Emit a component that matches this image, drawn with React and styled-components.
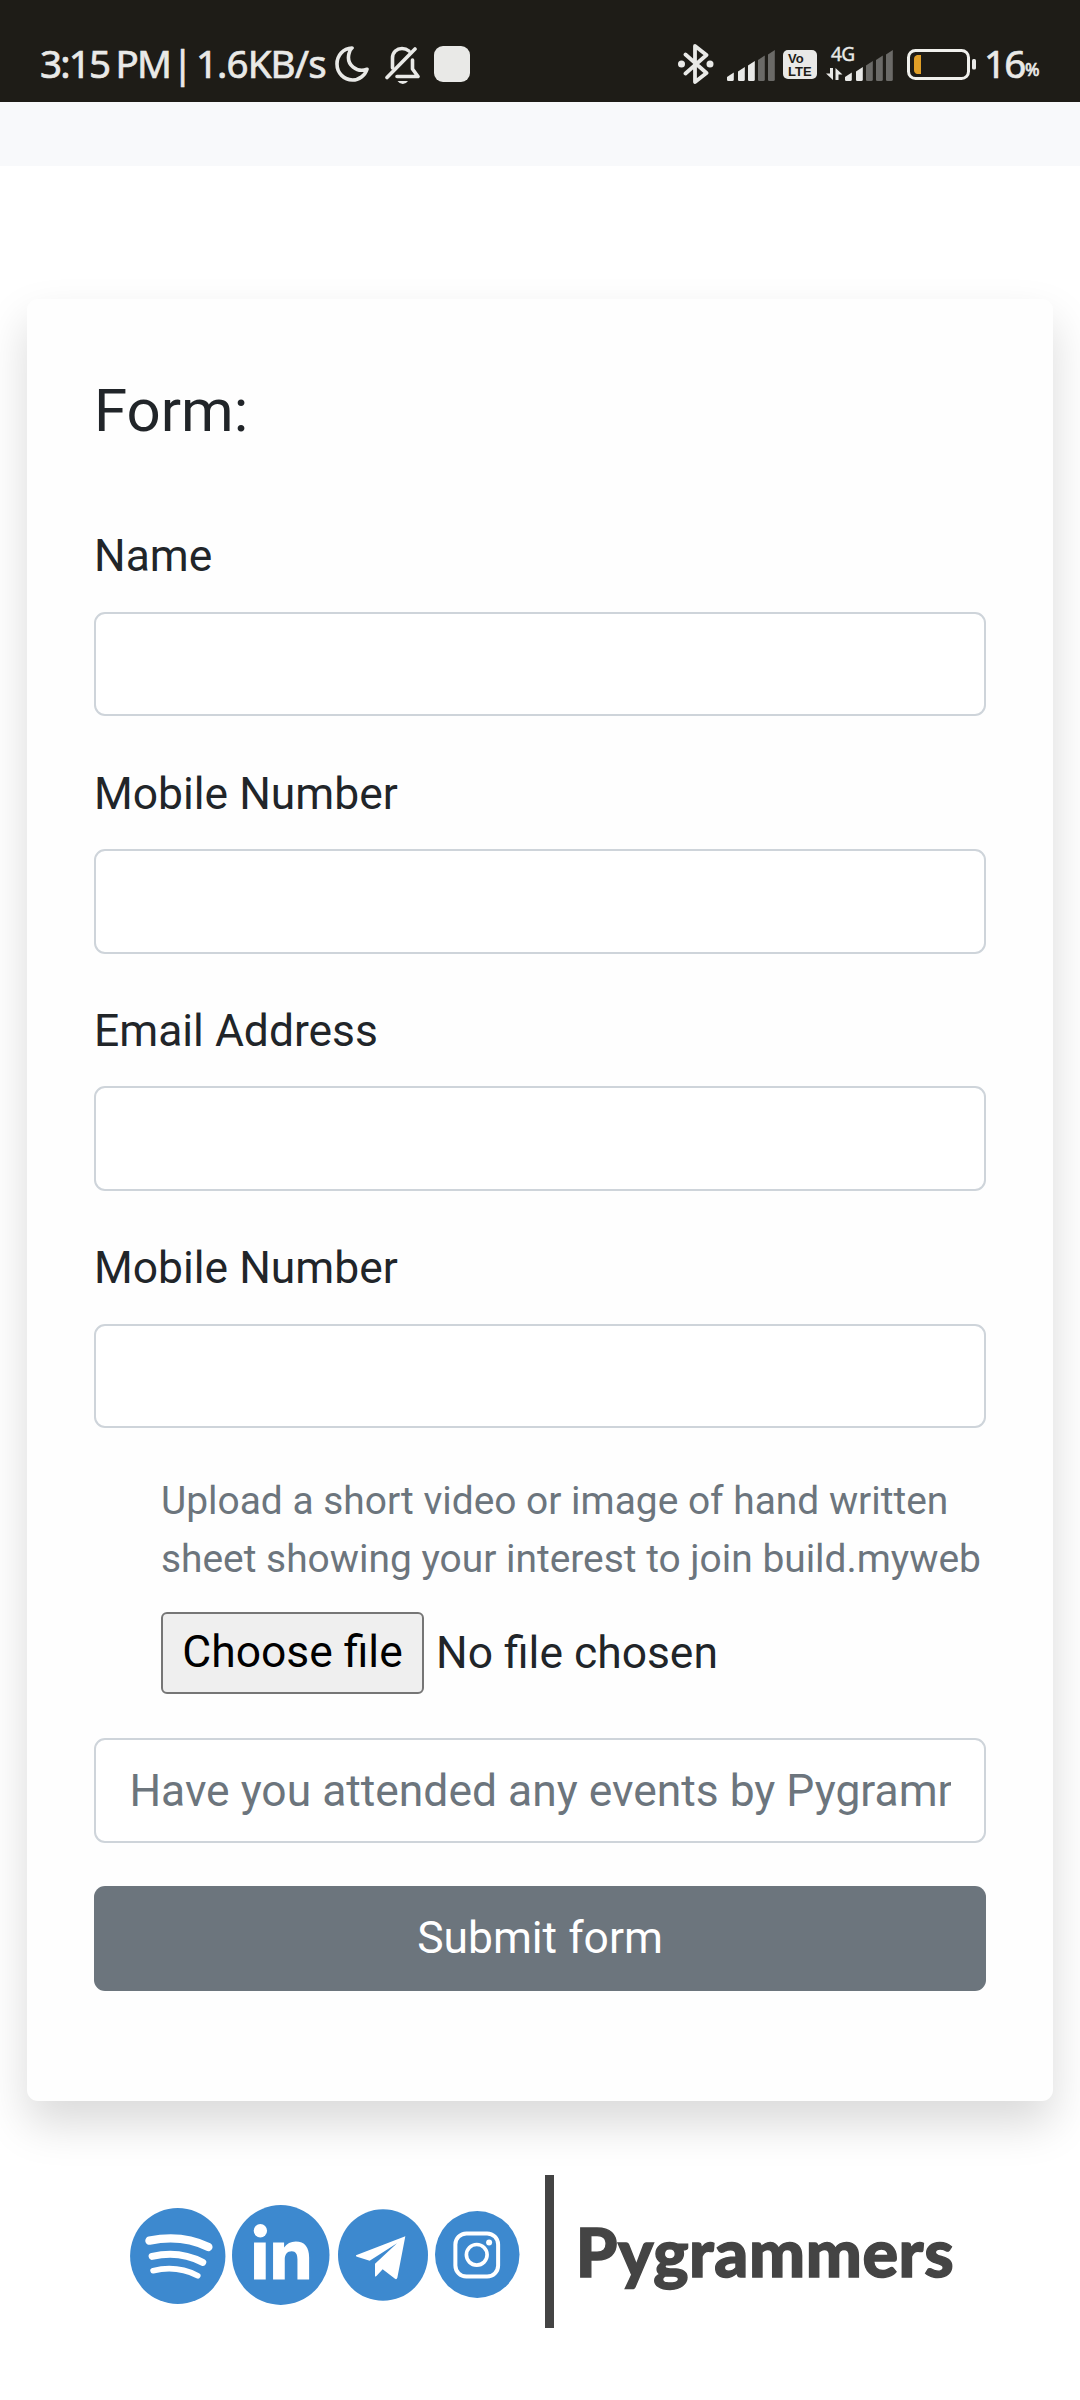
import React from "react";
import styled, { createGlobalStyle } from "styled-components";

const Global = createGlobalStyle`
  *, *::before, *::after { box-sizing: border-box; }
  body { margin: 0; background: #fff; color: #212529; font: 400 44.4px/66.9px Roboto, sans-serif; }
  svg { display: block; }
`;

const Page = styled.div`
  width: 1080px;
  height: 2400px;
  overflow: hidden;
  display: flex;
  flex-direction: column;
`;

const StatusBar = styled.header`
  height: 102px;
  flex: none;
  display: flex;
  align-items: flex-start;
  justify-content: space-between;
  padding: 44px 40px 0 40px;
  background: #1e1c17;
  color: #e9e9e7;
  font-family: "Noto Sans", sans-serif;
`;

const StatusGroup = styled.div`
  display: flex;
  align-items: flex-start;
`;

const StatusItem = styled.div`
  flex: none;
  width: ${(p) => p.$w}px;
  margin-left: ${(p) => p.$gap || 0}px;
  margin-top: ${(p) => p.$top || 0}px;
`;

const StatusText = styled(StatusItem)`
  height: 40px;
  line-height: 38px;
  font-size: ${(p) => p.$size || 38.5}px;
  letter-spacing: ${(p) => p.$track || 0}px;
  word-spacing: -2px;
  -webkit-text-stroke: 0.7px #e9e9e7;
  white-space: nowrap;
`;

const Square = styled(StatusItem)`
  height: 36px;
  border-radius: 9px;
  background: #e9e9e7;
`;

const VoLte = styled(StatusItem)`
  height: 29px;
  display: flex;
  flex-direction: column;
  gap: 1px;
  border-radius: 5px;
  background: #e9e9e7;
  color: #1e1c17;
  font: 700 13px/12px "Liberation Sans", sans-serif;
  padding: 2.5px 0 0 5px;
`;

const NetType = styled(StatusItem)`
  display: flex;
  flex-direction: column;
`;

const NetLabel = styled.span`
  margin-left: 5px;
  height: 22px;
  font-size: 19px;
  line-height: 16px;
  letter-spacing: -0.5px;
  -webkit-text-stroke: 0.4px #e9e9e7;
  white-space: nowrap;
`;

const NavStrip = styled.div`
  height: 64px;
  flex: none;
  background: #f8f9fb;
`;

const Card = styled.form`
  flex: none;
  width: 1026px;
  height: 1802px;
  margin: 133px 0 0 27px;
  padding: 76px 67px 0;
  border-radius: 11px;
  background: #fefefe;
  box-shadow: 0 22.3px 44.6px rgba(0, 0, 0, 0.15);
`;

const Title = styled.h4`
  margin: 0 0 76.4px;
  font-size: 60px;
  font-weight: 400;
  line-height: 72px;
`;

const Field = styled.div`
  margin-bottom: 44.1px;
`;

const Label = styled.label`
  display: block;
  margin-bottom: 21.8px;
`;

const Input = styled.input`
  display: block;
  width: 100%;
  height: 104.4px;
  padding: 1px 33.4px 0;
  border: 2px solid #ced4da;
  border-radius: 11px;
  background: #fff;
  font: inherit;
  &::placeholder { color: #6c757d; opacity: 1; }
`;

const Upload = styled.div`
  padding-left: 67px;
  margin-bottom: 44.4px;
`;

const Hint = styled.p`
  margin: 0 0 23px;
  color: #6c757d;
  font-size: 38.9px;
  line-height: 58.3px;
  white-space: nowrap;
`;

const FileRow = styled.div`
  display: flex;
  align-items: center;
  height: 82px;
`;

const FileButton = styled.button`
  width: 263px;
  height: 82px;
  margin-right: 12px;
  padding: 0 0 1px;
  border: 2px solid #767676;
  border-radius: 6px;
  background: #efefef;
  color: #000;
  font: inherit;
`;

const FileName = styled.span`
  padding-top: 2px;
`;

const Submit = styled.button`
  display: block;
  width: 100%;
  height: 104.5px;
  margin-top: 43.6px;
  padding: 1px 0 0;
  border: 0;
  border-radius: 11px;
  background: #6c757d;
  color: #fff;
  font: inherit;
`;

const Footer = styled.footer`
  display: flex;
  align-items: center;
  height: 154px;
  margin: 73px 0 0 130px;
`;

const Social = styled.svg`
  flex: none;
  width: ${(p) => p.$w}px;
  height: ${(p) => p.$h}px;
  margin-left: ${(p) => p.$gap || 0}px;
  margin-top: ${(p) => p.$drop || 0}px;
`;

const Divider = styled.span`
  width: 9px;
  height: 153px;
  margin-left: 25px;
  background: #444;
`;

const Brand = styled.span`
  margin-left: 22px;
  color: #444;
  font: 900 66.5px/80px Lato, sans-serif;
  letter-spacing: 0.6px;
  -webkit-text-stroke: 1.4px #444;
`;

const Bar = ({ left, height, color }) => (
  <path
    d={`M${left} ${31 - height + 4.5}l6.8-4.5V29.5q0 1.5-1.5 1.5H${left + 1.2}q-1.2 0-1.2-1.2z`}
    fill={color}
  />
);

const BARS = [
  [0, 8.5],
  [11, 14],
  [21, 20],
  [31, 25.5],
  [41, 31],
];

const Signal = ({ on }) => (
  <svg width="48" height="31" viewBox="0 0 48 31">
    {BARS.map(([left, height], i) => (
      <Bar key={left} left={left} height={height} color={i < on ? "#e9e9e7" : "#6b6a67"} />
    ))}
  </svg>
);

const Moon = () => (
  <svg width="34" height="36" viewBox="0 0 34 36" fill="none" stroke="#e9e9e7" strokeWidth="3.6" strokeLinejoin="round">
    <path d="M17 2C8 2.500 2 9.500 2 18c0 9 7 16 15.500 16C24 34 30 29.500 32 23.200 22 27 11 19 14 7.500 14.600 5 15.600 3.200 17 2z" />
  </svg>
);

const BellOff = () => (
  <svg width="35" height="38" viewBox="0 0 35 38" fill="none" stroke="#e9e9e7" strokeWidth="3.6" strokeLinecap="round" strokeLinejoin="round">
    <path d="M7.500 22V12C7.500 6 12 2.500 17 2.500c3 0 5 .8 7 2.500" />
    <path d="M30 3L2 31.500" />
    <path d="M27.500 14v9l5.500 7.500H12" />
    <path d="M12.500 35h10.500q-2 3-5.200 3t-5.300-3z" fill="#e9e9e7" stroke="none" />
  </svg>
);

const Bluetooth = () => (
  <svg width="36" height="40" viewBox="0 0 36 40" fill="none" stroke="#e9e9e7" strokeWidth="3.8" strokeLinecap="round" strokeLinejoin="round">
    <path d="M7.500 10.500L28.500 29 17 38V2l11.500 9L7.500 29.500" />
    <circle cx="3.500" cy="20" r="3.500" fill="#e9e9e7" stroke="none" />
    <circle cx="32" cy="20" r="3.500" fill="#e9e9e7" stroke="none" />
  </svg>
);

const DataArrows = () => (
  <svg width="17" height="12" viewBox="0 0 17 12" fill="#e9e9e7">
    <path d="M4 0h3v12L0 5.500h4zM9.500 12V0l7 6.500h-4V12z" />
  </svg>
);

const Battery = () => (
  <svg width="70" height="31" viewBox="0 0 70 31">
    <rect x="1.500" y="1.500" width="60" height="28" rx="7" fill="none" stroke="#f0f0ec" strokeWidth="3" />
    <path d="M10 6h4v19h-4q-3-1-3-4V10q0-3 3-4z" fill="#e09f27" />
    <rect x="65" y="10" width="4" height="10.500" rx="1.500" fill="#e9e9e7" />
  </svg>
);

const blue = "#3d89cf";

const Spotify = () => (
  <Social $w={95.5} $h={96} $drop={9} viewBox="60 174 286 288" fill="none" stroke="#fff" strokeLinecap="round">
    <ellipse cx="203" cy="318" rx="143" ry="144" fill={blue} stroke="none" />
    <path d="M118 272Q215 252 295 291" strokeWidth="25" />
    <path d="M126 319Q208 300 278 337" strokeWidth="21" />
    <path d="M129 362Q200 345 263 377" strokeWidth="17" />
  </Social>
);

const LinkedIn = () => (
  <Social $w={97.5} $h={100} $gap={6.5} $drop={7} viewBox="366 165 292 299">
    <ellipse cx="512" cy="314.500" rx="146" ry="149.500" fill={blue} />
    <circle cx="451" cy="242" r="20" fill="#fff" />
    <path
      fill="#fff"
      d="M432 277h35v111h-35zM489 277h33v15c8-12 20-18 35-18 27 0 40 17 40 48v66h-35v-60c0-16-5-25-17-25-14 0-21 9-21 26v59h-35z"
    />
  </Social>
);

const Telegram = () => (
  <Social $w={90} $h={92} $gap={8.7} $drop={8} viewBox="684 180 270 275">
    <ellipse cx="819" cy="317.500" rx="135" ry="137.500" fill={blue} />
    <path fill="#fff" d="M886 261L738 318q-1 4 3 5l38 12 82-53-66 62v37q2 2 5-1l18-20 37 29q5 3 7-3z" />
  </Social>
);

const Instagram = () => (
  <Social $w={84.5} $h={87} $gap={7} $drop={7} viewBox="976 185 253 260" fill="none" stroke="#fff">
    <ellipse cx="1102.500" cy="315" rx="126.500" ry="130" fill={blue} stroke="none" />
    <rect x="1037" y="252" width="128" height="129" rx="33" strokeWidth="12" />
    <circle cx="1101" cy="316" r="31" strokeWidth="11" />
    <circle cx="1138" cy="279" r="9" fill="#fff" stroke="none" />
  </Social>
);

const FIELDS = ["Name", "Mobile Number", "Email Address", "Mobile Number"];

export default function App() {
  return (
    <Page>
      <Global />
      <StatusBar>
        <StatusGroup>
          <StatusText $w={132} $track={-1.8}>3:15 PM</StatusText>
          <StatusText $w={24}>|</StatusText>
          <StatusText $w={132} $track={-0.9}>1.6KB/s</StatusText>
          <StatusItem $w={34} $gap={7} $top={2}><Moon /></StatusItem>
          <StatusItem $w={35} $gap={16} $top={2}><BellOff /></StatusItem>
          <Square $w={36} $gap={14} $top={2} />
        </StatusGroup>
        <StatusGroup>
          <StatusItem $w={36}><Bluetooth /></StatusItem>
          <StatusItem $w={48} $gap={13} $top={5.5}><Signal on={3} /></StatusItem>
          <VoLte $w={34} $gap={8} $top={6}>
            <span>Vo</span>
            <span>LTE</span>
          </VoLte>
          <NetType $w={17} $gap={9} $top={2}>
            <NetLabel>4G</NetLabel>
            <DataArrows />
          </NetType>
          <StatusItem $w={48} $gap={2} $top={5.5}><Signal on={2} /></StatusItem>
          <StatusItem $w={70} $gap={14} $top={5}><Battery /></StatusItem>
          <StatusText $w={41} $gap={7} $track={-1.8}>16</StatusText>
          <StatusText $w={15} $size={17.5} $top={6}>%</StatusText>
        </StatusGroup>
      </StatusBar>
      <NavStrip />
      <Card>
        <Title>Form:</Title>
        {FIELDS.map((name, i) => (
          <Field key={i}>
            <Label>{name}</Label>
            <Input type="text" />
          </Field>
        ))}
        <Upload>
          <Hint>
            Upload a short video or image of hand written
            <br />
            sheet showing your interest to join build.myweb
          </Hint>
          <FileRow>
            <FileButton type="button">Choose file</FileButton>
            <FileName>No file chosen</FileName>
          </FileRow>
        </Upload>
        <Input type="text" placeholder="Have you attended any events by Pygrammers?" />
        <Submit type="button">Submit form</Submit>
      </Card>
      <Footer>
        <Spotify />
        <LinkedIn />
        <Telegram />
        <Instagram />
        <Divider />
        <Brand>Pygrammers</Brand>
      </Footer>
    </Page>
  );
}
